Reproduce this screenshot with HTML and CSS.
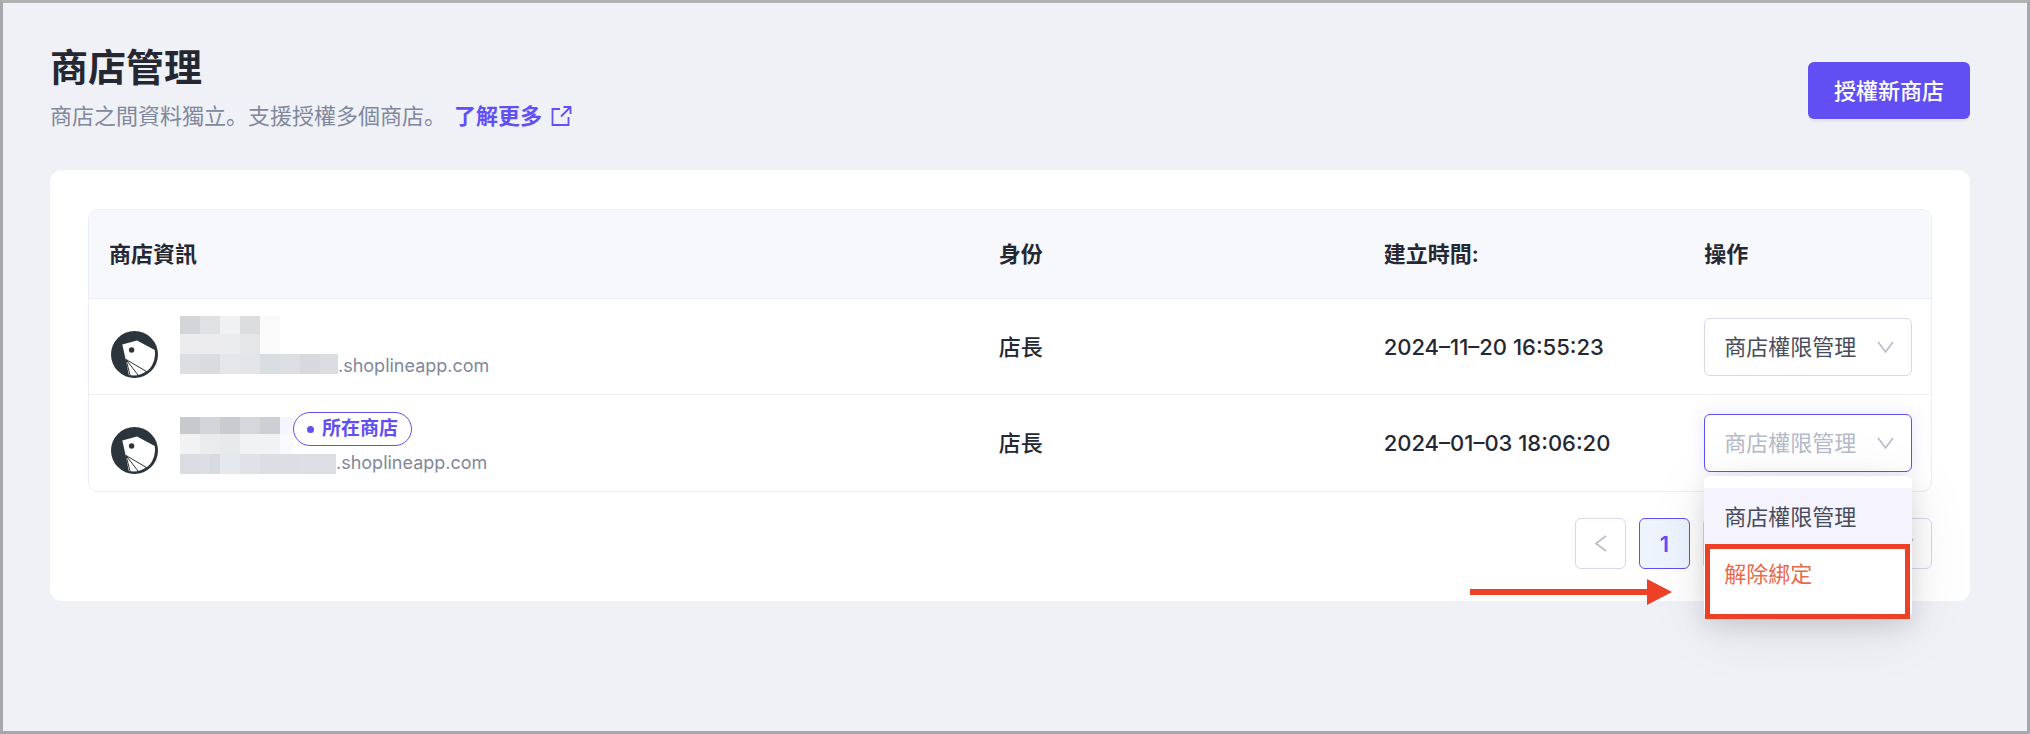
FILE: index.html
```
<!DOCTYPE html>
<html lang="zh-TW">
<head>
<meta charset="utf-8">
<title>商店管理</title>
<meta name="viewport" content="width=device-width, initial-scale=1">
<link rel="stylesheet" href="styles.css">
</head>
<body>
<svg class="defs" aria-hidden="true">
  <symbol id="logo" viewBox="0 0 47 47">
    <circle cx="23.500" cy="23.500" r="23.500" fill="#2d353c"/>
    <path d="M11.300 13.500 26 9.500 43.800 19C45.200 29 40 38.500 34.800 40.500 30 44 24 45.300 17.800 44L14.800 29Z" fill="#fff"/>
    <circle cx="20.600" cy="19" r="2.700" fill="#2d353c"/>
    <path d="M15 28.500 35.500 40.500M15 28.500 27 44M15 28.500 19 44" stroke="#2d353c" stroke-width="1" fill="none"/>
  </symbol>
  <symbol id="chevron" viewBox="0 0 17 12">
    <path d="M1 1 8.500 11 16 1" fill="none" stroke="currentColor" stroke-width="1.600"/>
  </symbol>
</svg>
<main class="page">
  <header class="page-head">
    <div>
      <h1 class="title">商店管理</h1>
      <p class="subtitle">商店之間資料獨立。支援授權多個商店。<a class="more" href="#more">了解更多
        <svg class="more-icon" viewBox="0 0 22 22" aria-hidden="true"><path d="M10 4H2.500V20H18.500V12M13.500 2H20.500V9M20.500 2 11 11.500" fill="none" stroke="currentColor" stroke-width="1.800"/></svg></a></p>
    </div>
    <button class="primary" type="button">授權新商店</button>
  </header>

  <section class="card">
    <div class="table-box">
      <table class="stores">
        <colgroup><col class="col-info"><col class="col-role"><col class="col-time"><col></colgroup>
        <thead>
          <tr><th scope="col">商店資訊</th><th scope="col">身份</th><th scope="col">建立時間:</th><th scope="col">操作</th></tr>
        </thead>
        <tbody>
          <tr>
            <td>
              <div class="store">
                <svg class="avatar" aria-hidden="true"><use href="#logo"/></svg>
                <div class="info">
                  <div class="name-line">
                    <svg class="mask-name" viewBox="0 0 100 38" aria-hidden="true">
                      <path fill="#d4d5d9" d="M0 0h20v18H0z"/><path fill="#e0e1e3" d="M20 0h20v18H20z"/><path fill="#f0f1f3" d="M40 0h20v18H40z"/><path fill="#dcddde" d="M60 0h20v18H60z"/><path fill="#fafafa" d="M80 0h20v38H80z"/>
                      <path fill="#ececee" d="M0 18h40v20H0z"/><path fill="#ebecee" d="M40 18h20v20H40z"/><path fill="#e5e6e8" d="M60 18h20v20H60z"/>
                    </svg>
                  </div>
                  <div class="host-line">
                    <svg class="mask-host" viewBox="0 0 158 20" aria-hidden="true">
                      <path fill="#dddee4" d="M0 0h20v20H0z"/><path fill="#dadbe1" d="M20 0h20v20H20z"/><path fill="#e5e6ea" d="M40 0h20v20H40z"/><path fill="#e3e5e9" d="M60 0h20v20H60z"/><path fill="#dadee3" d="M80 0h20v20H80z"/><path fill="#dedfe5" d="M100 0h20v20h-20z"/><path fill="#d8d9df" d="M120 0h20v20h-20z"/><path fill="#dcdde3" d="M140 0h18v20h-18z"/>
                    </svg>
                    <span>.shoplineapp.com</span>
                  </div>
                </div>
              </div>
            </td>
            <td>店長</td>
            <td>2024–11–20 16:55:23</td>
            <td>
              <div class="picker">
                <select class="select" aria-label="操作"><option>商店權限管理</option><option>解除綁定</option></select>
                <svg class="chevron" aria-hidden="true"><use href="#chevron"/></svg>
              </div>
            </td>
          </tr>
          <tr>
            <td>
              <div class="store">
                <svg class="avatar" aria-hidden="true"><use href="#logo"/></svg>
                <div class="info tagged">
                  <div class="name-line">
                    <svg class="mask-name" viewBox="0 0 113 37" aria-hidden="true">
                      <path fill="#c8c9cd" d="M0 0h20v17H0z"/><path fill="#d4d5d9" d="M20 0h20v17H20z"/><path fill="#cacbcf" d="M40 0h20v17H40z"/><path fill="#d6d7db" d="M60 0h20v17H60z"/><path fill="#cecfd2" d="M80 0h20v17H80z"/><path fill="#f5f4ff" d="M100 0h13v17h-13z"/>
                      <path fill="#f2f2f3" d="M0 17h20v20H0z"/><path fill="#eaebed" d="M20 17h20v20H20z"/><path fill="#e8e9eb" d="M40 17h20v20H40z"/><path fill="#f1f2f4" d="M60 17h40v20H60z"/><path fill="#faf9ff" d="M100 17h13v20h-13z"/>
                    </svg>
                    <span class="badge">所在商店</span>
                  </div>
                  <div class="host-line">
                    <svg class="mask-host" viewBox="0 0 156 20" aria-hidden="true">
                      <path fill="#dadce2" d="M0 0h20v20H0z"/><path fill="#dddee4" d="M20 0h20v20H20z"/><path fill="#d9dae0" d="M30 0h10v20H30z"/><path fill="#e5e8ec" d="M40 0h20v20H40z"/><path fill="#e0e2e8" d="M60 0h20v20H60z"/><path fill="#dcdee4" d="M80 0h40v20H80z"/><path fill="#dedfe5" d="M120 0h36v20h-36z"/>
                    </svg>
                    <span>.shoplineapp.com</span>
                  </div>
                </div>
              </div>
            </td>
            <td>店長</td>
            <td>2024–01–03 18:06:20</td>
            <td>
              <div class="picker">
                <select class="select active" aria-label="操作"><option>商店權限管理</option><option>解除綁定</option></select>
                <svg class="chevron" aria-hidden="true"><use href="#chevron"/></svg>
                <div class="menu">
                  <button class="item hovered" type="button">商店權限管理</button>
                  <button class="item danger" type="button">解除綁定</button>
                  <span class="highlight"></span>
                  <svg class="arrow" viewBox="0 0 202 26" aria-hidden="true"><path d="M0 10h177V0l25 13-25 13V16H0z" fill="#ec4127"/></svg>
                </div>
              </div>
            </td>
          </tr>
        </tbody>
      </table>
    </div>
    <nav class="pager" aria-label="分頁">
      <button class="page-btn" type="button" aria-label="上一頁"><svg class="prev-icon" viewBox="0 0 12 17" aria-hidden="true"><path d="M11 1 1 8.500 11 16" fill="none" stroke="currentColor" stroke-width="1.600"/></svg></button>
      <button class="page-btn current" type="button" aria-current="page">1</button>
      <div class="page-size">
        <select class="size-select" aria-label="每頁筆數"><option>10</option></select>
        <svg class="chevron" aria-hidden="true"><use href="#chevron"/></svg>
      </div>
    </nav>
  </section>
</main>
</body>
</html>
```
FILE: styles.css
```
* { box-sizing: border-box; }

body {
  margin: 0;
  color: #252833;
  background: #f0f1f6;
  font-family: Inter, "Noto Sans CJK SC", sans-serif;
  font-size: 22px;
  line-height: 32px;
  font-feature-settings: "locl" 0;
}

button, select { font: inherit; font-feature-settings: inherit; margin: 0; }

.defs { display: none; }

.page {
  min-height: 100vh;
  padding: 39px 57px 40px 47px;
  border: 3px solid #a8a8ac;
  border-top-color: #b1b1b1;
}

.page-head {
  display: flex;
  justify-content: space-between;
  align-items: flex-end;
  margin-bottom: 38px;
}

.title { margin: 0 0 8px; font-size: 38px; line-height: 50px; font-weight: 700; }
.subtitle { margin: 0; color: #7f889c; line-height: 32px; }
.more { margin-left: 8px; color: #6350f5; font-weight: 600; text-decoration: none; }
.more-icon { width: 22px; height: 22px; margin-left: 2px; vertical-align: -3px; }

.primary {
  height: 57px;
  margin-bottom: 13px;
  padding: 0 26px;
  border: 0;
  border-radius: 6px;
  color: #fff;
  background: #614ff3;
  font-weight: 500;
  box-shadow: 0 3px 0 rgba(0, 0, 0, 0.04);
}

.card { padding: 39px 38px 32px; border-radius: 12px; background: #fff; }
.table-box { border: 1px solid #ecedf5; border-radius: 10px; }
.stores { width: 100%; border-collapse: separate; border-spacing: 0; table-layout: fixed; }
.col-info { width: 48.3%; }
.col-role { width: 20.9%; }
.col-time { width: 17.4%; }

.stores th {
  height: 89px;
  padding: 0 20px;
  border-bottom: 1px solid #ecedf5;
  background: #f7f8fc;
  font-weight: 600;
  text-align: left;
}
.stores th:first-child { border-top-left-radius: 10px; }
.stores th:last-child { border-top-right-radius: 10px; }
.stores td { height: 96px; padding: 0 20px; font-weight: 500; }
.stores tr:first-child td { border-bottom: 1px solid #ecedf5; }

.store { display: flex; gap: 22px; min-height: 62px; padding-left: 2px; }
.avatar { width: 47px; height: 47px; align-self: flex-end; }
.name-line { display: flex; height: 38px; }
.host-line {
  display: flex;
  height: 20px;
  color: #7f889c;
  font-size: 18px;
  font-weight: 400;
  line-height: 24px;
}
.tagged .name-line { height: 42px; align-items: flex-end; }
.tagged .host-line { line-height: 18px; }
.mask-name { width: 100px; height: 38px; }
.mask-host { width: 158px; height: 20px; }
.tagged .mask-name { width: 113px; height: 37px; }
.tagged .mask-host { width: 156px; }

.badge {
  display: flex;
  align-items: center;
  gap: 8px;
  align-self: flex-start;
  height: 34px;
  padding: 0 13px;
  border: 1px solid #614ff3;
  border-radius: 17px;
  color: #614ff3;
  font-size: 19px;
  font-weight: 600;
}
.badge::before { content: ""; width: 7px; height: 7px; border-radius: 50%; background: #614ff3; }

.picker { position: relative; width: 208px; }
.select {
  display: block;
  width: 100%;
  height: 58px;
  padding: 0 19px;
  border: 1px solid #d8d6e8;
  border-radius: 6px;
  appearance: none;
  color: #464c5c;
  background: #fff;
  font-weight: 400;
}
.select.active { border-color: #614ff3; color: #b4bac9; box-shadow: 0 0 18px rgba(97, 79, 243, 0.15); }
.chevron {
  position: absolute;
  top: 50%;
  right: 18px;
  width: 17px;
  height: 12px;
  margin-top: -6px;
  color: #b7bccb;
  pointer-events: none;
}

.menu {
  position: absolute;
  z-index: 2;
  top: calc(100% + 4px);
  left: 0;
  width: 100%;
  padding: 12px 0 16px;
  border-radius: 6px;
  background: #fff;
  box-shadow: 0 8px 24px rgba(0, 0, 0, 0.12), 0 12px 64px rgba(0, 0, 0, 0.08);
}
.item {
  display: block;
  width: 100%;
  height: 57px;
  padding: 0 20px;
  border: 0;
  color: #464c5c;
  background: none;
  font-weight: 400;
  text-align: left;
}
.hovered { background: #f5f3fe; }
.danger { color: #e9694a; }
.highlight { position: absolute; inset: 68px 2px -1px 1px; border: 5px solid #ec4127; }
.arrow { position: absolute; top: 103px; right: 240px; width: 202px; height: 26px; }

.pager { display: flex; justify-content: flex-end; gap: 13px; margin-top: 26px; }
.page-btn {
  display: grid;
  place-items: center;
  width: 51px;
  height: 51px;
  padding: 0;
  border: 1px solid #d8d6e8;
  border-radius: 6px;
  color: #b7bccb;
  background: #fff;
}
.current { border-color: #614ff3; color: #614ff3; background: #edf4fe; font-weight: 600; }
.prev-icon { width: 12px; height: 17px; }
.page-size { position: relative; width: 229px; }
.size-select {
  width: 100%;
  height: 51px;
  padding: 0 19px;
  border: 1px solid #d8d6e8;
  border-radius: 6px;
  appearance: none;
  color: #464c5c;
  background: #fff;
}
```
